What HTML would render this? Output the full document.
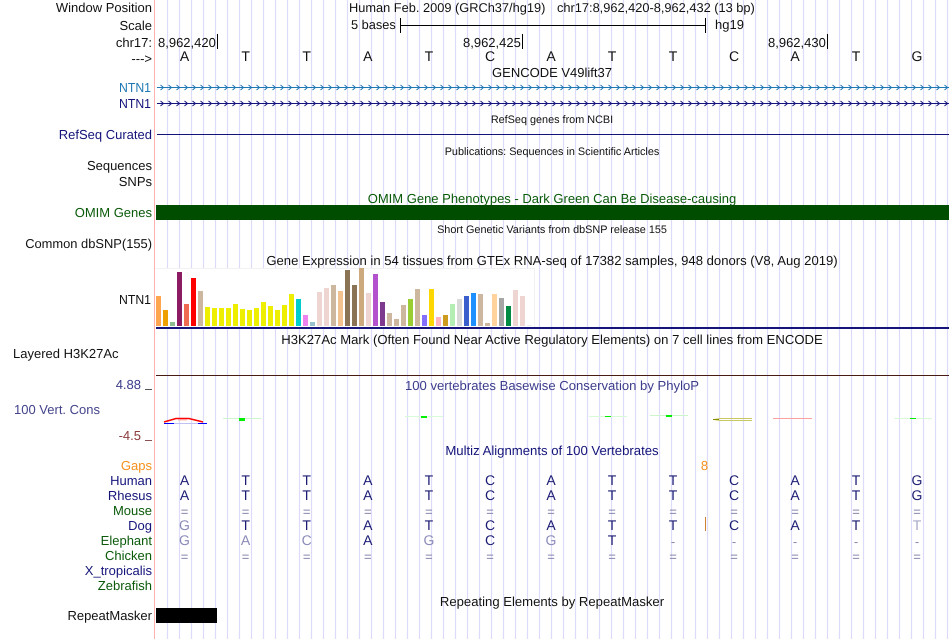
<!DOCTYPE html>
<html><head><meta charset="utf-8"><style>
html,body{margin:0;padding:0;background:#fff;width:950px;height:639px;overflow:hidden}
svg{display:block}
text{font-family:"Liberation Sans",sans-serif;font-size:13px;fill:#111;text-rendering:geometricPrecision}
.r{text-anchor:end}
.c{text-anchor:middle}
.s{font-size:10.85px}
.b{font-size:14px}
.t{font-size:13.1px}
.h{font-size:12.8px}
.q{font-size:13px}
.n{fill:#14147a}
.g{fill:#0a5a0a}
.d{fill:#1c1c74}
.l{fill:#8a8ab8}
.e{fill:#8888b0}
.u{fill:#3c3c8c}
</style></head><body>
<svg width="950" height="639" viewBox="0 0 950 639" xmlns="http://www.w3.org/2000/svg">
<defs>
<pattern id="ch1" x="158" y="82" width="8" height="12" patternUnits="userSpaceOnUse"><path d="M2.500 3L5.500 5.500L2.500 8" fill="none" stroke="#1f78b4" stroke-width="1"/></pattern>
<pattern id="ch2" x="158" y="98" width="8" height="12" patternUnits="userSpaceOnUse"><path d="M2.500 3L5.500 5.500L2.500 8" fill="none" stroke="#14147a" stroke-width="1"/></pattern>
</defs>
<path fill="none" stroke="#dcdcfa" stroke-width="1.200" d="M167.500 0V639M179.500 0V639M191.500 0V639M203.500 0V639M215.500 0V639M227.500 0V639M239.500 0V639M251.500 0V639M263.500 0V639M275.500 0V639M287.500 0V639M299.500 0V639M311.500 0V639M323.500 0V639M335.500 0V639M347.500 0V639M359.500 0V639M371.500 0V639M383.500 0V639M395.500 0V639M407.500 0V639M419.500 0V639M431.500 0V639M443.500 0V639M455.500 0V639M467.500 0V639M479.500 0V639M491.500 0V639M503.500 0V639M515.500 0V639M527.500 0V639M539.500 0V639M551.500 0V639M563.500 0V639M575.500 0V639M587.500 0V639M599.500 0V639M611.500 0V639M623.500 0V639M635.500 0V639M647.500 0V639M659.500 0V639M671.500 0V639M683.500 0V639M695.500 0V639M707.500 0V639M719.500 0V639M731.500 0V639M743.500 0V639M755.500 0V639M767.500 0V639M779.500 0V639M791.500 0V639M803.500 0V639M815.500 0V639M827.500 0V639M839.500 0V639M851.500 0V639M863.500 0V639M875.500 0V639M887.500 0V639M899.500 0V639M911.500 0V639M923.500 0V639M935.500 0V639M947.500 0V639"/>
<rect x="154" y="0" width="1" height="639" fill="#ffb0b0"/>

<!-- header labels -->
<text class="r" x="152" y="12">Window Position</text>
<text class="r" x="152" y="30">Scale</text>
<text class="r" x="152" y="47">chr17:</text>
<text class="r" x="152" y="63">---&gt;</text>
<text class="h" x="349" y="12">Human Feb. 2009 (GRCh37/hg19)</text>
<text class="h" x="557" y="12">chr17:8,962,420-8,962,432 (13 bp)</text>
<text class="h" x="351" y="29">5 bases</text>
<text x="715" y="29">hg19</text>
<path d="M400.500 18V33M400 25.500H706M705.500 18V33" stroke="#000" fill="none"/>
<text x="158" y="47">8,962,420</text><rect x="217" y="34" width="1" height="15" fill="#000"/>
<text x="463" y="47">8,962,425</text><rect x="522" y="34" width="1" height="15" fill="#000"/>
<text x="768" y="47">8,962,430</text><rect x="827" y="34" width="1" height="15" fill="#000"/>
<g>
<text class="c b" x="184.500" y="61">A</text><text class="c b" x="245.600" y="61">T</text><text class="c b" x="306.700" y="61">T</text><text class="c b" x="367.800" y="61">A</text><text class="c b" x="428.900" y="61">T</text><text class="c b" x="490" y="61">C</text><text class="c b" x="551" y="61">A</text><text class="c b" x="612" y="61">T</text><text class="c b" x="673" y="61">T</text><text class="c b" x="734" y="61">C</text><text class="c b" x="795" y="61">A</text><text class="c b" x="856" y="61">T</text><text class="c b" x="917" y="61">G</text>
</g>
<text class="c" x="552" y="77">GENCODE V49lift37</text>

<!-- genes -->
<text class="r" x="151" y="92" style="fill:#1f78b4" textLength="32" lengthAdjust="spacingAndGlyphs">NTN1</text>
<text class="r" x="151" y="108" style="fill:#14147a" textLength="32" lengthAdjust="spacingAndGlyphs">NTN1</text>
<rect x="157" y="87" width="792" height="1" fill="#1f78b4"/>
<rect x="157" y="82" width="792" height="12" fill="url(#ch1)"/>
<rect x="157" y="103" width="792" height="1" fill="#14147a"/>
<rect x="157" y="98" width="792" height="12" fill="url(#ch2)"/>
<text class="c s" x="552" y="123">RefSeq genes from NCBI</text>
<text class="r n" x="152" y="139">RefSeq Curated</text>
<rect x="157" y="134" width="792" height="1" fill="#14147a"/>
<text class="c s" x="552" y="155">Publications: Sequences in Scientific Articles</text>
<text class="r" x="152" y="170">Sequences</text>
<text class="r" x="152" y="186">SNPs</text>
<text class="c g" x="552" y="203">OMIM Gene Phenotypes - Dark Green Can Be Disease-causing</text>
<text class="r g" x="152" y="217">OMIM Genes</text>
<rect x="156" y="205" width="793" height="15" fill="#004d00"/>
<text class="c s" x="552" y="233">Short Genetic Variants from dbSNP release 155</text>
<text class="r" x="152" y="248" style="font-size:12.9px">Common dbSNP(155)</text>
<text class="c t" x="552" y="265">Gene Expression in 54 tissues from GTEx RNA-seq of 17382 samples, 948 donors (V8, Aug 2019)</text>
<text class="r" x="151" y="304" textLength="32" lengthAdjust="spacingAndGlyphs">NTN1</text>

<!-- GTEx -->
<rect x="155" y="268" width="380" height="59" fill="#fff"/>
<path d="M155.500 268.500H534.500V327" fill="none" stroke="#f2f2f2"/>
<g>
<rect x="156" y="296" width="5" height="30" fill="#ffa54f"/>
<rect x="163" y="310" width="5" height="16" fill="#eea000"/>
<rect x="170" y="322" width="5" height="4" fill="#8fbc8f"/>
<rect x="177" y="272" width="5" height="54" fill="#8b1c62"/>
<rect x="184" y="304" width="5" height="22" fill="#ee6a50"/>
<rect x="191" y="278" width="5" height="48" fill="#ff0000"/>
<rect x="198" y="291" width="5" height="35" fill="#cdb79e"/>
<rect x="205" y="307" width="5" height="19" fill="#eeee00"/>
<rect x="212" y="308" width="5" height="18" fill="#eeee00"/>
<rect x="219" y="308" width="5" height="18" fill="#eeee00"/>
<rect x="226" y="308" width="5" height="18" fill="#eeee00"/>
<rect x="233" y="304" width="5" height="22" fill="#eeee00"/>
<rect x="240" y="309" width="5" height="17" fill="#eeee00"/>
<rect x="247" y="310" width="5" height="16" fill="#eeee00"/>
<rect x="254" y="308" width="5" height="18" fill="#eeee00"/>
<rect x="261" y="302" width="5" height="24" fill="#eeee00"/>
<rect x="268" y="306" width="5" height="20" fill="#eeee00"/>
<rect x="275" y="310" width="5" height="16" fill="#eeee00"/>
<rect x="282" y="305" width="5" height="21" fill="#eeee00"/>
<rect x="289" y="294" width="5" height="32" fill="#eeee00"/>
<rect x="296" y="299" width="5" height="27" fill="#00cdcd"/>
<rect x="303" y="315" width="5" height="11" fill="#ee82ee"/>
<rect x="310" y="322" width="5" height="4" fill="#9ac0cd"/>
<rect x="317" y="292" width="5" height="34" fill="#eed5d2"/>
<rect x="324" y="288" width="5" height="38" fill="#eed5d2"/>
<rect x="331" y="285" width="5" height="41" fill="#cdb79e"/>
<rect x="338" y="291" width="5" height="35" fill="#f4c28e"/>
<rect x="345" y="270" width="5" height="56" fill="#8b7355"/>
<rect x="352" y="285" width="5" height="41" fill="#8b7355"/>
<rect x="359" y="268" width="5" height="58" fill="#cdaa7d"/>
<rect x="366" y="293" width="5" height="33" fill="#eed5d2"/>
<rect x="373" y="274" width="5" height="52" fill="#b452cd"/>
<rect x="380" y="302" width="5" height="24" fill="#7d3a8f"/>
<rect x="387" y="313" width="5" height="13" fill="#cdb79e"/>
<rect x="394" y="319" width="5" height="7" fill="#cdb79e"/>
<rect x="401" y="305" width="5" height="21" fill="#cdb79e"/>
<rect x="408" y="299" width="5" height="27" fill="#9acd32"/>
<rect x="415" y="289" width="5" height="37" fill="#cdb79e"/>
<rect x="422" y="315" width="5" height="11" fill="#8470ff"/>
<rect x="429" y="289" width="5" height="37" fill="#ffd700"/>
<rect x="436" y="317" width="5" height="9" fill="#ffb6c1"/>
<rect x="443" y="315" width="5" height="11" fill="#cd9b1d"/>
<rect x="450" y="304" width="5" height="22" fill="#b4eeb4"/>
<rect x="457" y="299" width="5" height="27" fill="#d9d9d9"/>
<rect x="464" y="296" width="5" height="30" fill="#3a5fcd"/>
<rect x="471" y="293" width="5" height="33" fill="#1e90ff"/>
<rect x="478" y="294" width="5" height="32" fill="#cdb79e"/>
<rect x="485" y="323" width="5" height="3" fill="#cdb79e"/>
<rect x="492" y="294" width="5" height="32" fill="#ffd39b"/>
<rect x="499" y="298" width="5" height="28" fill="#a6a6a6"/>
<rect x="506" y="306" width="5" height="20" fill="#008b45"/>
<rect x="513" y="290" width="5" height="36" fill="#eed5d2"/>
<rect x="520" y="296" width="5" height="30" fill="#eed5d2"/>
<rect x="527" y="325" width="5" height="1" fill="#eeeeee"/>
</g>
<rect x="156" y="327" width="793" height="2" fill="#14147a"/>

<!-- H3K27Ac -->
<text class="c t" x="552" y="344">H3K27Ac Mark (Often Found Near Active Regulatory Elements) on 7 cell lines from ENCODE</text>
<text x="13" y="358">Layered H3K27Ac</text>
<rect x="156" y="375" width="793" height="1" fill="#4a1a14"/>

<!-- Conservation -->
<text class="c u t" x="552" y="390">100 vertebrates Basewise Conservation by PhyloP</text>
<text class="r u" x="141" y="389">4.88</text>
<rect x="145" y="389" width="7" height="1" fill="#555"/>
<text x="14" y="414" style="fill:#44448c">100 Vert. Cons</text>
<text class="r" x="141" y="440" style="fill:#8c3c3c">-4.5</text>
<rect x="145" y="440" width="7" height="1" fill="#8c5050"/>
<path d="M164 422L176 418.500H189L203 422" fill="none" stroke="#f00" stroke-width="1.500"/>
<path d="M178 420H187" stroke="#fbb" stroke-width="1"/>
<rect x="164" y="423" width="10" height="1" fill="#0000ff"/>
<rect x="174" y="423" width="24" height="1" fill="#c0c0f4"/>
<rect x="198" y="423" width="9" height="1" fill="#0000ff"/>
<rect x="223" y="418" width="38" height="1" fill="#ccf5cc"/><rect x="239" y="418" width="6" height="3" fill="#00ee00"/>
<rect x="405" y="416" width="38" height="1" fill="#d8fad8"/><rect x="421" y="416" width="6" height="2" fill="#00ee00"/>
<rect x="589" y="416" width="38" height="1" fill="#d8fad8"/><rect x="605" y="416" width="6" height="1" fill="#00ee00"/>
<rect x="650" y="415" width="38" height="1" fill="#ccf5cc"/><rect x="666" y="415" width="6" height="2" fill="#00ee00"/>
<path d="M714 419.500L720 418.500H752M714 419.500L720 420.500H752" fill="none" stroke="#c8c860" stroke-width="1"/>
<rect x="713" y="419" width="6" height="1" fill="#8c8c00"/>
<rect x="773" y="418" width="39" height="1" fill="#ffa0a0"/>
<rect x="894" y="418" width="38" height="1" fill="#d8fad8"/><rect x="910" y="418" width="6" height="1" fill="#00ee00"/>

<!-- Multiz -->
<text class="c n" x="552" y="455" style="font-size:13.15px">Multiz Alignments of 100 Vertebrates</text>
<text class="r" x="152" y="470" style="fill:#f5901e">Gaps</text>
<text class="c" x="704.500" y="470" style="fill:#f5901e">8</text>
<text class="r n" x="152" y="485">Human</text>
<text class="r n" x="152" y="500">Rhesus</text>
<text class="r g" x="152" y="515">Mouse</text>
<text class="r n" x="152" y="530">Dog</text>
<text class="r g" x="152" y="545">Elephant</text>
<text class="r g" x="152" y="560">Chicken</text>
<text class="r n" x="152" y="575">X_tropicalis</text>
<text class="r g" x="152" y="590">Zebrafish</text>

<text class="c d b" x="184.500" y="485">A</text><text class="c d b" x="245.600" y="485">T</text><text class="c d b" x="306.700" y="485">T</text><text class="c d b" x="367.800" y="485">A</text><text class="c d b" x="428.900" y="485">T</text><text class="c d b" x="490" y="485">C</text><text class="c d b" x="551" y="485">A</text><text class="c d b" x="612" y="485">T</text><text class="c d b" x="673" y="485">T</text><text class="c d b" x="734" y="485">C</text><text class="c d b" x="795" y="485">A</text><text class="c d b" x="856" y="485">T</text><text class="c d b" x="917" y="485">G</text>

<text class="c d b" x="184.500" y="500">A</text><text class="c d b" x="245.600" y="500">T</text><text class="c d b" x="306.700" y="500">T</text><text class="c d b" x="367.800" y="500">A</text><text class="c d b" x="428.900" y="500">T</text><text class="c d b" x="490" y="500">C</text><text class="c d b" x="551" y="500">A</text><text class="c d b" x="612" y="500">T</text><text class="c d b" x="673" y="500">T</text><text class="c d b" x="734" y="500">C</text><text class="c d b" x="795" y="500">A</text><text class="c d b" x="856" y="500">T</text><text class="c d b" x="917" y="500">G</text>

<text class="c e q" x="184.500" y="516">=</text><text class="c e q" x="245.600" y="516">=</text><text class="c e q" x="306.700" y="516">=</text><text class="c e q" x="367.800" y="516">=</text><text class="c e q" x="428.900" y="516">=</text><text class="c e q" x="490" y="516">=</text><text class="c e q" x="551" y="516">=</text><text class="c e q" x="612" y="516">=</text><text class="c e q" x="673" y="516">=</text><text class="c e q" x="734" y="516">=</text><text class="c e q" x="795" y="516">=</text><text class="c e q" x="856" y="516">=</text><text class="c e q" x="917" y="516">=</text>

<text class="c l b" x="184.500" y="530">G</text><text class="c d b" x="245.600" y="530">T</text><text class="c d b" x="306.700" y="530">T</text><text class="c d b" x="367.800" y="530">A</text><text class="c d b" x="428.900" y="530">T</text><text class="c d b" x="490" y="530">C</text><text class="c d b" x="551" y="530">A</text><text class="c d b" x="612" y="530">T</text><text class="c d b" x="673" y="530">T</text><text class="c d b" x="734" y="530">C</text><text class="c d b" x="795" y="530">A</text><text class="c d b" x="856" y="530">T</text><text class="c b" x="917" y="530" style="fill:#a8a8c8">T</text>
<rect x="705" y="517" width="1" height="14" fill="#cc8030"/>

<text class="c l b" x="184.500" y="545">G</text><text class="c l b" x="245.600" y="545">A</text><text class="c l b" x="306.700" y="545">C</text><text class="c d b" x="367.800" y="545">A</text><text class="c l b" x="428.900" y="545">G</text><text class="c d b" x="490" y="545">C</text><text class="c l b" x="551" y="545">G</text><text class="c d b" x="612" y="545">T</text><text class="c e q" x="673" y="546">-</text><text class="c e q" x="734" y="546">-</text><text class="c e q" x="795" y="546">-</text><text class="c e q" x="856" y="546">-</text><text class="c e q" x="917" y="546">-</text>

<text class="c e q" x="184.500" y="561">=</text><text class="c e q" x="245.600" y="561">=</text><text class="c e q" x="306.700" y="561">=</text><text class="c e q" x="367.800" y="561">=</text><text class="c e q" x="428.900" y="561">=</text><text class="c e q" x="490" y="561">=</text><text class="c e q" x="551" y="561">=</text><text class="c e q" x="612" y="561">=</text><text class="c e q" x="673" y="561">=</text><text class="c e q" x="734" y="561">=</text><text class="c e q" x="795" y="561">=</text><text class="c e q" x="856" y="561">=</text><text class="c e q" x="917" y="561">=</text>

<text class="c t" x="552" y="606">Repeating Elements by RepeatMasker</text>
<text class="r" x="152" y="620">RepeatMasker</text>
<rect x="156" y="608" width="61" height="15" fill="#000"/>
</svg>
</body></html>
